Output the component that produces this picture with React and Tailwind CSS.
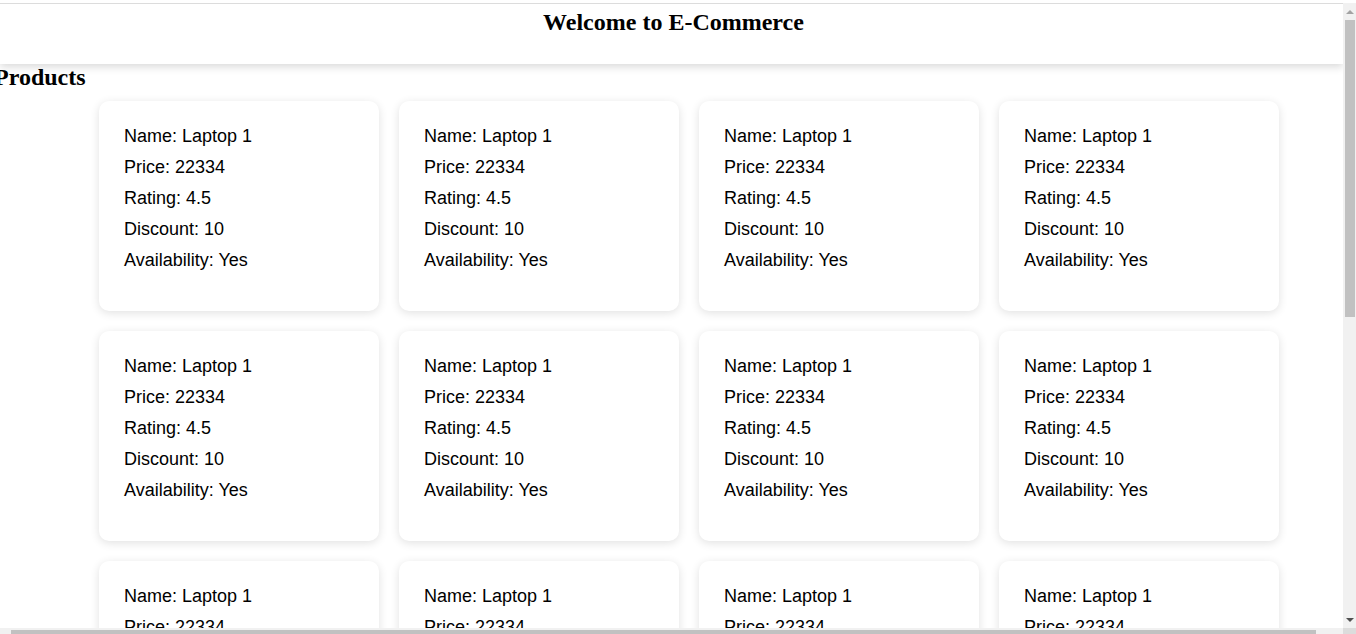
import React from "react";

const products = Array.from({ length: 12 }, () => ({
  name: "Laptop 1",
  price: 22334,
  rating: 4.5,
  discount: 10,
  availability: "Yes",
}));

function ProductCard({ p }) {
  return (
    <div className="h-[210px] rounded-[10px] bg-white pt-[20px] pl-[25px] shadow-[0_2px_10px_rgba(0,0,0,0.12)] font-['Liberation_Sans',Arial,sans-serif] text-[18px] leading-[31px] text-black">
      <p>Name: {p.name}</p>
      <p>Price: {p.price}</p>
      <p>Rating: {p.rating}</p>
      <p>Discount: {p.discount}</p>
      <p>Availability: {p.availability}</p>
    </div>
  );
}

export default function App() {
  return (
    <div className="flex h-screen w-screen flex-col overflow-hidden bg-white">
      {/* top edge */}
      <div className="h-[3px] shrink-0 bg-white" />
      <div className="flex min-h-0 flex-1">
        <div className="flex min-w-0 flex-1 flex-col">
          <div className="h-px shrink-0 bg-[#dcdcdc]" />
          <div className="min-h-0 flex-1 overflow-hidden">
            <header className="relative z-10 h-[60px] bg-white pt-[4px] pl-[4px] text-center shadow-[0_3px_8px_rgba(0,0,0,0.15)]">
              <h2 className="font-['Liberation_Serif','Times_New_Roman',serif] text-[24px] font-bold leading-[28px] text-black">
                Welcome to E-Commerce
              </h2>
            </header>
            <h2 className="ml-[-6px] mt-[-1px] font-['Liberation_Serif','Times_New_Roman',serif] text-[24px] font-bold leading-[28px] text-black">
              Products
            </h2>
            <div className="mt-[10px] grid w-[1180px] grid-cols-4 gap-5 ml-[99px]">
              {products.map((p, i) => (
                <ProductCard key={i} p={p} />
              ))}
            </div>
          </div>
        </div>
        {/* vertical scrollbar */}
        <div className="relative flex w-[13px] shrink-0 flex-col items-center bg-[#f1f1f1]">
          <div className="mt-[7px] h-0 w-0 border-x-[4px] border-b-[4px] border-x-transparent border-b-[#a3a3a3]" />
          <div className="mt-[6px] h-[297px] w-[10px] bg-[#c1c1c1]" />
          <div className="flex-1" />
          <div className="mb-[6px] h-0 w-0 border-x-[4px] border-t-[4px] border-x-transparent border-t-[#505050]" />
        </div>
      </div>
      {/* horizontal scrollbar */}
      <div className="flex h-[6px] shrink-0">
        <div className="flex flex-1 bg-[#f1f1f1] pt-[2px]">
          <div className="w-[11px]" />
          <div className="h-[4px] w-[1305px] bg-[#c1c1c1]" />
        </div>
        <div className="w-[13px] bg-[#dcdcdc]" />
      </div>
    </div>
  );
}
